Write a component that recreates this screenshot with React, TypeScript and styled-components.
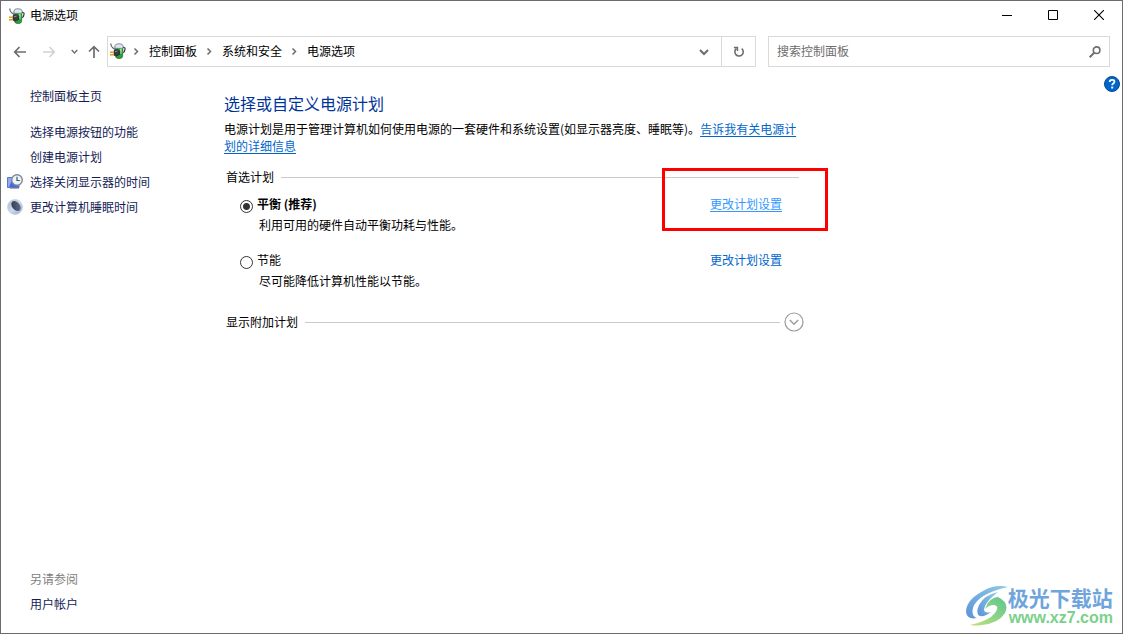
import React, { useState } from 'react';
import styled, { createGlobalStyle } from 'styled-components';

const GlobalStyle = createGlobalStyle`
  *, *::before, *::after { box-sizing: border-box; }
  body {
    margin: 0;
    background: #fff;
    color: #000;
    font: 12px/17px "Noto Sans CJK SC", sans-serif;
  }
  button, input { font: inherit; color: inherit; }
  svg { display: block; flex: none; }
`;

const Window = styled.div`
  position: relative;
  display: flex;
  flex-direction: column;
  min-height: 100vh;
  border: 1px solid #6b6b6d;
  background: #fff;
`;

const TitleBar = styled.header`
  display: flex;
  align-items: center;
  height: 30px;
  padding-left: 8px;
`;

const Title = styled.h1`
  flex: 1;
  margin: 0 0 0 5px;
  padding-bottom: 3px;
  font-size: 12px;
  font-weight: 400;
`;

const PlainButton = styled.button`
  display: flex;
  align-items: center;
  justify-content: center;
  flex: none;
  padding: 0;
  border: 0;
  background: none;
`;

const CaptionButton = styled(PlainButton)`
  width: 46px;
  height: 30px;
  padding-bottom: 2px;
`;

const NavBar = styled.nav`
  display: flex;
  align-items: center;
  padding: 5px 12px 0 8px;
`;

const NavButton = styled(PlainButton)<{ $width: number }>`
  width: ${(p) => p.$width}px;
  height: 31px;
`;

const AddressBar = styled.div`
  display: flex;
  align-items: center;
  flex: 1;
  height: 31px;
  border: 1px solid #d9d9d9;
`;

const Crumbs = styled.ol`
  display: flex;
  align-items: center;
  flex: 1;
  margin: 0;
  padding: 0 0 2px 2px;
  list-style: none;
`;

const Crumb = styled.li`
  display: flex;
  align-items: center;
  gap: 9px;

  & + & { margin-left: 8px; }
  &:nth-child(2) { margin-left: 6px; }
  a { color: #000; text-decoration: none; }
`;

const RefreshButton = styled(PlainButton)`
  width: 34px;
  height: 29px;
  border-left: 1px solid #d9d9d9;
`;

const SearchBox = styled.label`
  display: flex;
  align-items: center;
  width: 342px;
  height: 31px;
  margin-left: 12px;
  padding: 0 8px;
  border: 1px solid #d9d9d9;
`;

const SearchInput = styled.input`
  flex: 1;
  min-width: 0;
  padding: 0 0 2px;
  border: 0;
  outline: 0;
  background: none;

  &::placeholder { color: #6d6d6d; opacity: 1; }
`;

const Body = styled.div`
  display: grid;
  grid-template-columns: 223px minmax(0, 1fr) auto;
  flex: 1;
`;

const Sidebar = styled.aside`
  display: flex;
  flex-direction: column;
  padding: 16px 0 17px 6px;
`;

const TaskList = styled.ul`
  margin: 11px 0 auto;
  padding: 0;
  list-style: none;
`;

const SideRow = styled.div`
  display: grid;
  grid-template-columns: 16px 1fr;
  column-gap: 7px;
  align-items: center;
  height: 25px;
`;

const SideLink = styled.a`
  grid-column: 2;
  color: #151c55;
  text-decoration: none;
`;

const SideCaption = styled.span`
  grid-column: 2;
  color: #808080;
`;

const Main = styled.main`
  max-width: 580px;
  padding-top: 24px;
`;

const Heading = styled.h2`
  margin: 0 0 5px;
  color: #003399;
  font-size: 16px;
  font-weight: 400;
  line-height: 24px;
`;

const Intro = styled.p`
  margin: 0 0 14px;
`;

const Link = styled.a<{ $hot?: boolean; $underlined?: boolean }>`
  color: ${(p) => (p.$hot ? '#3399ff' : '#0066cc')};
  text-decoration: ${(p) => (p.$underlined ? 'underline' : 'none')};
  text-underline-offset: 2px;
`;

const PlanGroup = styled.fieldset`
  display: grid;
  row-gap: 18px;
  margin: 0;
  padding: 0;
  border: 0;
`;

const GroupTitle = styled.div`
  display: flex;
  align-items: center;
  gap: 7px;
  padding: 0 5px 0 2px;
  margin-bottom: -8px;
`;

const Rule = styled.span`
  flex: 1;
  height: 1px;
  margin-top: 2px;
  background: #cacaca;
`;

const Plan = styled.div`
  display: grid;
  grid-template-columns: 13px 1fr auto;
  column-gap: 4px;
  row-gap: 4px;
  padding: 0 22px 0 16px;
`;

const Radio = styled.input`
  appearance: none;
  width: 13px;
  height: 13px;
  margin: 5px 0 -1px;
  border: 1px solid #333;
  border-radius: 50%;
  background: #fff;

  &:checked {
    background: radial-gradient(circle, #333 3px, #fff 4px);
  }
`;

const PlanName = styled.label<{ $bold: boolean }>`
  font-weight: ${(p) => (p.$bold ? 700 : 400)};
`;

const PlanText = styled.p`
  grid-column: 2 / -1;
  margin: 0;
  padding-left: 2px;
`;

const LinkCell = styled.span`
  position: relative;
`;

const Highlight = styled.span`
  position: absolute;
  inset: -27px -46px -19px -48px;
  border: 3px solid #ff0000;
  pointer-events: none;
`;

const MoreRow = styled.div`
  display: flex;
  align-items: center;
  gap: 7px;
  margin-top: 23px;
  padding-left: 2px;
`;

const MoreLabel = styled.span`
  padding-bottom: 1px;
`;

const MoreRule = styled(Rule)`
  margin: 0 -3px 0 0;
`;

const HelpButton = styled(PlainButton)`
  width: 16px;
  height: 16px;
  margin: 9px 2px 0 0;
`;

const Watermark = styled.div`
  position: absolute;
  right: 9px;
  bottom: 6px;
  display: flex;
  align-items: center;
`;

const SiteName = styled.div`
  color: #6fa5dc;
  font-size: 21px;
  font-weight: 700;
  line-height: 24px;
`;

const SiteUrl = styled.div`
  padding-left: 1px;
  color: #7ad18b;
  font: 700 16px/18px "Liberation Sans", sans-serif;
`;

const PowerIcon = () => (
  <svg width="16" height="16" viewBox="0 0 16 16">
    <path d="M12 4.500h1.800q1.500 0 1.200 1.700l-.6 2.300q-.4 1-1.900 1" fill="none" stroke="#30383a" strokeWidth="1.2" />
    <path d="M5 3q0-2 4-2t4 2l-.4 10.500q-.2 2-3.500 2t-3.500-2z" fill="#22a53a" stroke="#315940" strokeWidth=".7" />
    <path d="M5 3q0-2.200 4-2.200t4 2.200l-.1 2.300H5.200z" fill="#dfe5f0" stroke="#737b87" strokeWidth=".6" />
    <path d="M10 5.800h1.800l-.2 5H10z" fill="#8be78c" />
    <path d="M.8.5q0 3 1.900 4.200t3.300 2.600" fill="none" stroke="#59636f" strokeWidth="1.200" />
    <path d="M4 7.600l3.500-1.200 2.400 1.800-.2 3.200-2.900 1.600L4 12.300z" fill="#39393b" stroke="#202022" strokeWidth=".6" />
    <path d="M5 8.800l2.600-.8" stroke="#a0a0a4" strokeWidth=".9" />
    <path d="M0 9.300h3.700M0 11.800h3.700" stroke="#dba012" strokeWidth="1.500" />
  </svg>
);

const CrumbArrow = () => (
  <svg width="8" height="8" viewBox="0 0 8 8">
    <path d="M2.500 1.500l3 3-3 3" fill="none" stroke="#6d6d6d" strokeWidth="1.500" />
  </svg>
);

const Chevron = ({ size = 10, color = '#6d6d6d', weight = 2 }: { size?: number; color?: string; weight?: number }) => (
  <svg width={size} height={size} viewBox="0 0 10 10">
    <path d="M1 3l4 4 4-4" fill="none" stroke={color} strokeWidth={weight} />
  </svg>
);

const Arrow = ({ color, turn = 0 }: { color: string; turn?: number }) => (
  <svg width="14" height="14" viewBox="0 0 14 14">
    <path
      d="M13 7H2M6.500 2L1.700 7l4.800 5"
      fill="none"
      stroke={color}
      strokeWidth="1.700"
      transform={`rotate(${turn} 7 7)`}
    />
  </svg>
);

const RefreshIcon = () => (
  <svg width="12" height="12" viewBox="0 0 12 12">
    <path d="M8.700 2.600A4.200 4.200 0 1 1 3.500 2.500" fill="none" stroke="#6d6d6d" strokeWidth="1.600" />
    <path d="M.9 1.500h3.600V5" fill="none" stroke="#6d6d6d" strokeWidth="1.400" />
  </svg>
);

const SearchIcon = () => (
  <svg width="12" height="12" viewBox="0 0 12 12">
    <circle cx="7.600" cy="4.200" r="3.300" fill="none" stroke="#6d6d6d" strokeWidth="1.600" />
    <path d="M5.300 6.600L.7 11.200" stroke="#6d6d6d" strokeWidth="2" />
  </svg>
);

const DisplayClockIcon = () => (
  <svg width="16" height="16" viewBox="0 0 16 16">
    <path d="M.5 3.500H12v10H.5z" fill="#4468e2" stroke="#6478b8" />
    <path d="M1 4h5L2 13H1z" fill="#8fabf6" />
    <path d="M3 14.500h9" stroke="#a9adb8" />
    <circle cx="10" cy="6" r="5.300" fill="#eef4f7" stroke="#80888f" strokeWidth="1.400" />
    <path d="M10 2.800V6.500h2.800" fill="none" stroke="#3a5976" strokeWidth="1.200" />
  </svg>
);

const MoonIcon = () => (
  <svg width="16" height="16" viewBox="0 0 16 16">
    <defs>
      <linearGradient id="moon" x1="0" y1="0" x2="1" y2="1">
        <stop offset="0" stopColor="#a9b6c6" />
        <stop offset=".5" stopColor="#c9dbf2" />
        <stop offset="1" stopColor="#93a9c4" />
      </linearGradient>
      <linearGradient id="shade" x1="0" y1="0" x2="1" y2="1">
        <stop offset="0" stopColor="#2c3448" />
        <stop offset="1" stopColor="#68738e" />
      </linearGradient>
    </defs>
    <circle cx="8" cy="8" r="7.500" fill="url(#moon)" stroke="#c8d1de" strokeWidth=".8" />
    <ellipse cx="9" cy="7" rx="3.800" ry="5.600" transform="rotate(-42 9 7)" fill="url(#shade)" />
  </svg>
);

const HelpIcon = () => (
  <svg width="16" height="16" viewBox="0 0 16 16">
    <circle cx="8" cy="8" r="7.500" fill="#0066cc" stroke="#0a4a8c" />
    <path d="M5.700 6q0-2.200 2.400-2.200t2.300 2q0 1.100-1.300 1.800-.9.5-.9 1.700" fill="none" stroke="#fff" strokeWidth="1.800" />
    <path d="M7.200 10.600h2v1.900h-2z" fill="#fff" />
  </svg>
);

const ExpandIcon = () => (
  <svg width="20" height="20" viewBox="0 0 20 20">
    <circle cx="10" cy="10" r="9" fill="#fff" stroke="#999" strokeWidth="1.200" />
    <path d="M5.800 8l4.200 4.200L14.200 8" fill="none" stroke="#a0a0a0" strokeWidth="1.600" />
  </svg>
);

const SiteLogo = () => (
  <svg width="43" height="42" viewBox="0 0 43 42">
    <defs>
      <linearGradient id="swirlBlue" x1="1" y1="0" x2="0" y2="1">
        <stop offset="0" stopColor="#8dcbe6" />
        <stop offset="1" stopColor="#5d94d9" />
      </linearGradient>
      <linearGradient id="swirlGreen" x1="1" y1="0" x2="0" y2="1">
        <stop offset="0" stopColor="#5cc58f" />
        <stop offset="1" stopColor="#bfe27c" />
      </linearGradient>
    </defs>
    <path d="M43 2Q30-1 18 6 1 15 1 27q1 8 11 6-6-2-4-10Q12 9 43 2z" fill="url(#swirlBlue)" />
    <path d="M33 7Q19 10 14 20q-4 9 1 11 5 1 11-4-7 2-7-3 1-7 14-17z" fill="url(#swirlBlue)" />
    <path d="M33 12q12 6 7 16-6 10-23 12-7 1-12 0 19-4 25-12 5-7-1-8-5 0-9 4 3-8 7-10 3-2 6-2z" fill="url(#swirlGreen)" />
  </svg>
);

const tasks = [
  { text: '选择电源按钮的功能' },
  { text: '创建电源计划' },
  { text: '选择关闭显示器的时间', icon: <DisplayClockIcon /> },
  { text: '更改计算机睡眠时间', icon: <MoonIcon /> },
];

const plans = [
  { id: 'balanced', name: '平衡 (推荐)', text: '利用可用的硬件自动平衡功耗与性能。' },
  { id: 'saver', name: '节能', text: '尽可能降低计算机性能以节能。' },
];

export default function App() {
  const [active, setActive] = useState('balanced');

  return (
    <Window>
      <GlobalStyle />
      <TitleBar>
        <PowerIcon />
        <Title>电源选项</Title>
        <CaptionButton aria-label="最小化">
          <svg width="10" height="10"><path d="M0 5.500h10" stroke="#000" /></svg>
        </CaptionButton>
        <CaptionButton aria-label="最大化">
          <svg width="10" height="10"><path d="M.5.5h9v9h-9z" fill="none" stroke="#000" /></svg>
        </CaptionButton>
        <CaptionButton aria-label="关闭">
          <svg width="10" height="10"><path d="M0 0l10 10M10 0L0 10" stroke="#000" strokeWidth="1.100" /></svg>
        </CaptionButton>
      </TitleBar>

      <NavBar>
        <NavButton $width={22} aria-label="后退"><Arrow color="#6d6d6d" /></NavButton>
        <NavButton $width={36} aria-label="前进"><Arrow color="#d2d2d2" turn={180} /></NavButton>
        <NavButton $width={14} aria-label="最近位置"><Chevron size={7} /></NavButton>
        <NavButton $width={26} aria-label="上移"><Arrow color="#6d6d6d" turn={90} /></NavButton>
        <AddressBar>
          <Crumbs>
            <Crumb><PowerIcon /></Crumb>
            {['控制面板', '系统和安全', '电源选项'].map((name) => (
              <Crumb key={name}>
                <CrumbArrow />
                <a href="#">{name}</a>
              </Crumb>
            ))}
          </Crumbs>
          <NavButton $width={34} aria-label="历史记录"><Chevron /></NavButton>
          <RefreshButton aria-label="刷新"><RefreshIcon /></RefreshButton>
        </AddressBar>
        <SearchBox>
          <SearchInput type="text" placeholder="搜索控制面板" aria-label="搜索控制面板" />
          <SearchIcon />
        </SearchBox>
      </NavBar>

      <Body>
        <Sidebar>
          <SideRow><SideLink href="#">控制面板主页</SideLink></SideRow>
          <TaskList>
            {tasks.map((task) => (
              <SideRow as="li" key={task.text}>
                {task.icon}
                <SideLink href="#">{task.text}</SideLink>
              </SideRow>
            ))}
          </TaskList>
          <SideRow><SideCaption>另请参阅</SideCaption></SideRow>
          <SideRow><SideLink href="#">用户帐户</SideLink></SideRow>
        </Sidebar>

        <Main>
          <Heading>选择或自定义电源计划</Heading>
          <Intro>
            电源计划是用于管理计算机如何使用电源的一套硬件和系统设置(如显示器亮度、睡眠等)。
            <Link href="#" $underlined>告诉我有关电源计划的详细信息</Link>
          </Intro>
          <PlanGroup aria-label="首选计划">
            <GroupTitle>首选计划<Rule /></GroupTitle>
            {plans.map((plan, index) => (
              <Plan key={plan.id}>
                <Radio
                  type="radio"
                  name="plan"
                  id={plan.id}
                  checked={active === plan.id}
                  onChange={() => setActive(plan.id)}
                />
                <PlanName htmlFor={plan.id} $bold={active === plan.id}>{plan.name}</PlanName>
                <LinkCell>
                  <Link href="#" $hot={index === 0} $underlined={index === 0}>更改计划设置</Link>
                  {index === 0 && <Highlight />}
                </LinkCell>
                <PlanText>{plan.text}</PlanText>
              </Plan>
            ))}
          </PlanGroup>
          <MoreRow>
            <MoreLabel>显示附加计划</MoreLabel>
            <MoreRule />
            <PlainButton aria-label="显示附加计划"><ExpandIcon /></PlainButton>
          </MoreRow>
        </Main>

        <HelpButton aria-label="帮助"><HelpIcon /></HelpButton>
      </Body>

      <Watermark>
        <SiteLogo />
        <div>
          <SiteName>极光下载站</SiteName>
          <SiteUrl>www.xz7.com</SiteUrl>
        </div>
      </Watermark>
    </Window>
  );
}
